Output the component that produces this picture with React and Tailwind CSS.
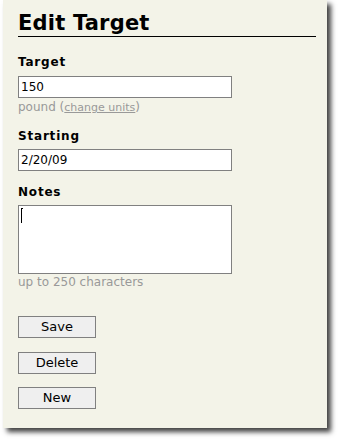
export default function App() {
    const font = { fontFamily: '"DejaVu Sans", Verdana, sans-serif' };

    return (
        <div className="min-h-screen bg-white pb-[12px]" style={font}>
            <div className="ml-[3px] w-[324px] bg-[#f3f3e8] pl-[15px] pr-[11px] pt-[10px] pb-[19px] shadow-[4px_4px_5px_rgba(0,0,0,0.75)]">
                <h1 className="text-[21px] font-bold leading-[26px] tracking-[0.2px] text-black border-b border-black">Edit Target</h1>

                <label className="block mt-[18px] text-[12px] leading-[14px] font-bold text-black tracking-[0.8px]">Target</label>
                <input
                    type="text"
                    defaultValue="150"
                    className="block mt-[7px] w-[214px] h-[22px] bg-white border border-[#808080] px-[2px] text-[12px] text-black outline-none"
                />
                <div className="mt-[2px] text-[12px] leading-[14px] text-[#999999]">
                    pound (<a href="#" className="text-[11px] underline">change units</a>)
                </div>

                <label className="block mt-[14px] text-[12px] leading-[14px] font-bold text-black tracking-[0.8px]">Starting</label>
                <input
                    type="text"
                    defaultValue="2/20/09"
                    className="block mt-[6px] w-[214px] h-[22px] bg-white border border-[#808080] px-[2px] text-[12px] text-black outline-none"
                />

                <label className="block mt-[14px] text-[12px] leading-[14px] font-bold text-black tracking-[0.8px]">Notes</label>
                <div className="relative mt-[6px] w-[214px]">
                    <textarea className="block w-[214px] h-[69px] bg-white border border-[#808080] px-[2px] text-[12px] text-black outline-none resize-none" />
                    <span className="absolute left-[3px] top-[3px] w-px h-[15px] bg-black" />
                    <span className="absolute left-[3px] top-[3px] w-[2px] h-px bg-black" />
                </div>
                <div className="mt-[1px] text-[12px] leading-[14px] text-[#999999]">up to 250 characters</div>

                <div className="flex flex-col items-start">
                    <button className="mt-[27px] w-[78px] h-[22px] bg-[#efefef] border border-[#808080] text-[13px] text-black">Save</button>
                    <button className="mt-[14px] w-[78px] h-[22px] bg-[#efefef] border border-[#808080] text-[13px] text-black">Delete</button>
                    <button className="mt-[13px] w-[78px] h-[22px] bg-[#efefef] border border-[#808080] text-[13px] text-black">New</button>
                </div>
            </div>
        </div>
    );
}
